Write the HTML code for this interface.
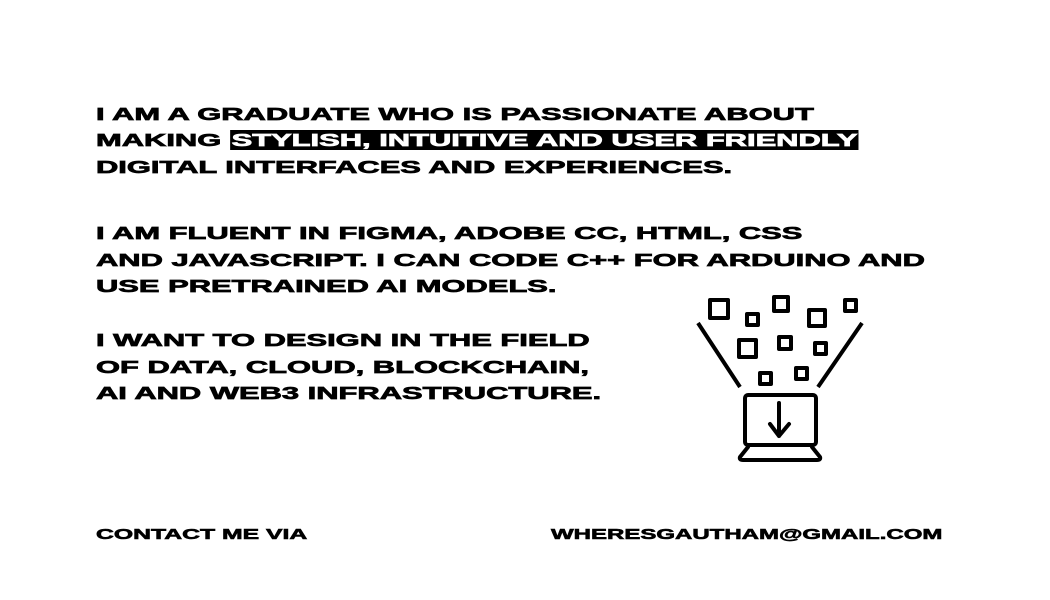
<!DOCTYPE html>
<html><head><meta charset="utf-8"><style>
body{margin:0;width:1050px;height:600px;background:#fff;overflow:hidden;position:relative;font-family:"Liberation Sans",Arial,sans-serif;font-weight:bold;color:#000}
.l{position:absolute;left:96px;white-space:nowrap;font-size:17.5px;line-height:20px;transform:scaleX(1.765);transform-origin:left center;-webkit-text-stroke:0.7px #000}
.hl{background:#000;color:#fff;-webkit-text-stroke:0.7px #fff;padding:0 1px}
.c{position:absolute;white-space:nowrap;font-size:15px;line-height:18px;transform:scaleX(1.6);transform-origin:left center;-webkit-text-stroke:0.6px #000}
</style></head><body>
<div class="l" style="top:104px">I AM A GRADUATE WHO IS PASSIONATE ABOUT</div>
<div class="l" style="top:130px">MAKING <span class="hl">STYLISH, INTUITIVE AND USER FRIENDLY</span></div>
<div class="l" style="top:157px">DIGITAL INTERFACES AND EXPERIENCES.</div>
<div class="l" style="top:223px">I AM FLUENT IN FIGMA, ADOBE CC, HTML, CSS</div>
<div class="l" style="top:250px">AND JAVASCRIPT. I CAN CODE C++ FOR ARDUINO AND</div>
<div class="l" style="top:276px">USE PRETRAINED AI MODELS.</div>
<div class="l" style="top:330px">I WANT TO DESIGN IN THE FIELD</div>
<div class="l" style="top:357px">OF DATA, CLOUD, BLOCKCHAIN,</div>
<div class="l" style="top:383px">AI AND WEB3 INFRASTRUCTURE.</div>
<div class="c" style="left:96px;top:526px;transform:scaleX(1.65)">CONTACT ME VIA</div>
<div class="c" style="left:551px;top:526px">WHERESGAUTHAM@GMAIL.COM</div>
<svg width="1050" height="600" style="position:absolute;left:0;top:0" fill="none" stroke="#000" stroke-width="4" stroke-linejoin="round" stroke-linecap="round">
<rect x="710" y="300" width="18" height="18"/>
<rect x="747" y="314" width="11" height="11"/>
<rect x="774" y="297" width="14" height="14"/>
<rect x="809" y="310" width="16" height="16"/>
<rect x="845" y="300" width="11" height="11"/>
<rect x="739" y="340" width="17" height="17"/>
<rect x="779" y="337" width="12" height="12"/>
<rect x="815" y="343" width="11" height="11"/>
<rect x="760" y="373" width="11" height="11"/>
<rect x="796" y="368" width="11" height="11"/>
<path d="M698 323 L740 387 M862 323 L818 387" stroke-linecap="butt"/>
<rect x="745" y="395" width="71" height="50" rx="3"/>
<path d="M748 447 L740 457 Q739 460 743 460 L817 460 Q821 460 820 457 L812 447"/>
<path d="M779 403 L779 436 M770 424 L779 436 L789 424"/>
</svg>
</body></html>
